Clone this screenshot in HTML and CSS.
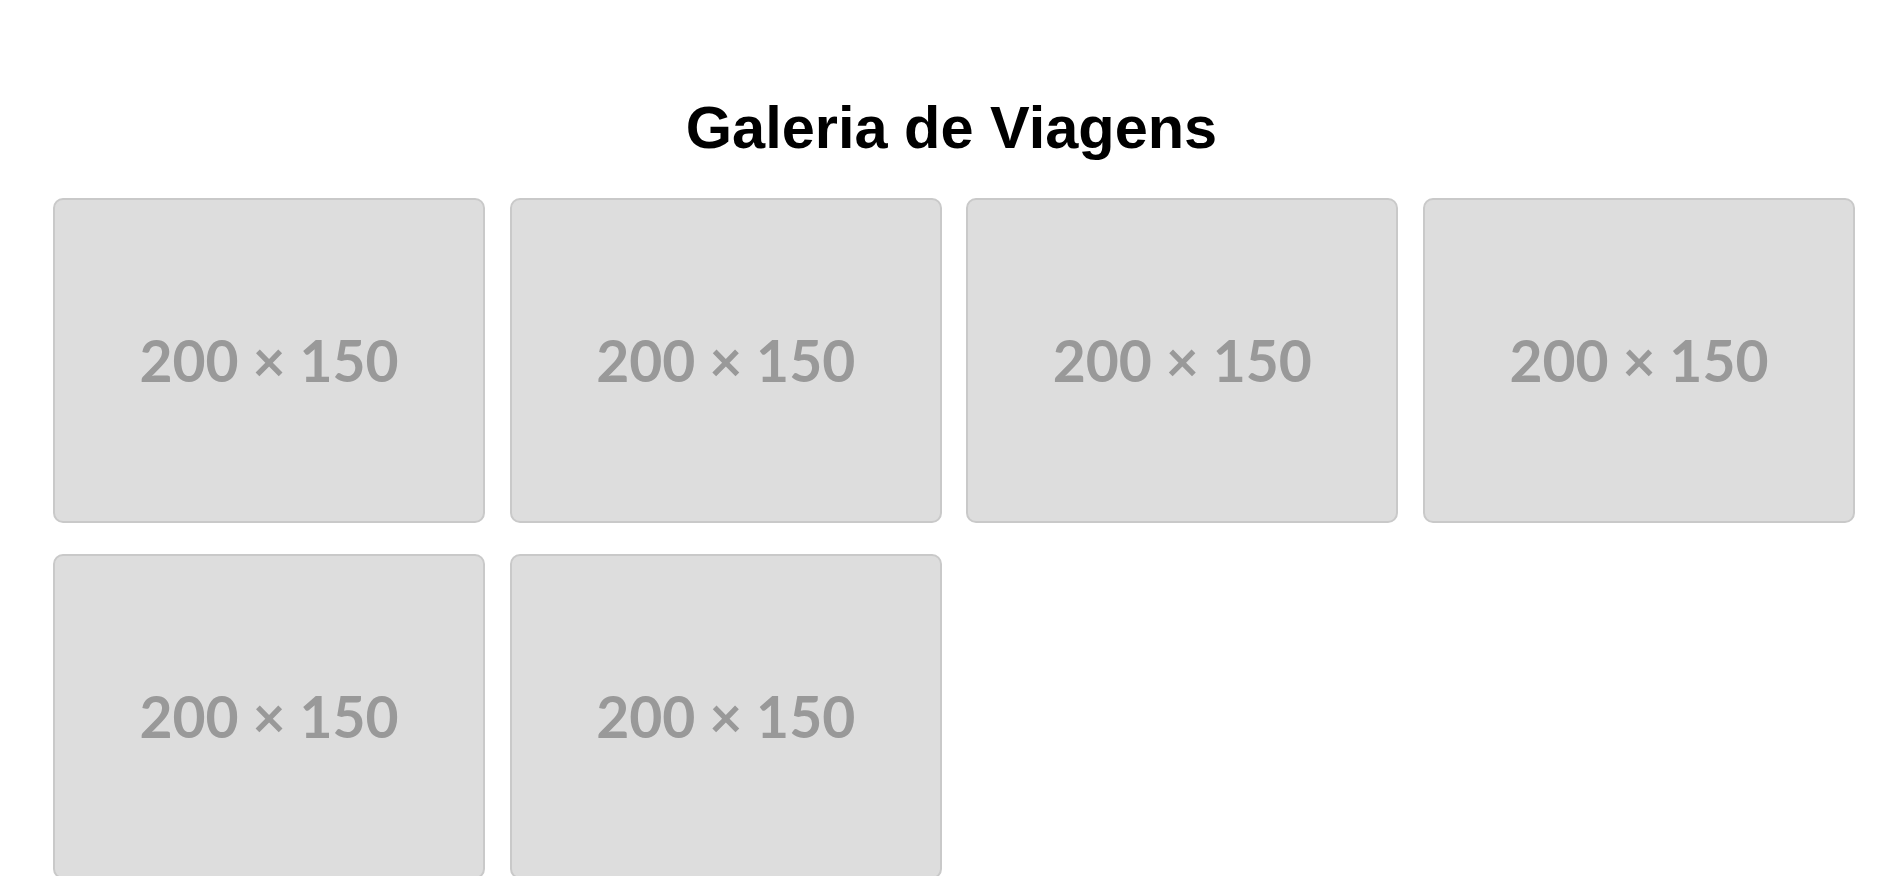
FILE: index.html
```html
<!DOCTYPE html>
<html lang="pt">
<head>
<meta charset="utf-8">
<title>Galeria de Viagens</title>
<link rel="stylesheet" href="styles.css">
</head>
<body>
<h1 class="title">Galeria de Viagens</h1>
<div class="gallery">
  <div class="photo"><span class="ph-text">200 × 150</span></div>
  <div class="photo"><span class="ph-text">200 × 150</span></div>
  <div class="photo"><span class="ph-text">200 × 150</span></div>
  <div class="photo"><span class="ph-text">200 × 150</span></div>
  <div class="photo"><span class="ph-text">200 × 150</span></div>
  <div class="photo"><span class="ph-text">200 × 150</span></div>
</div>
</body>
</html>
```

FILE: styles.css
```css
html, body {
  margin: 0;
  padding: 0;
  background: #ffffff;
}

body {
  font-family: "Liberation Sans", Arial, sans-serif;
  color: #000;
}

.title {
  margin: 93px 0 36px;
  font-size: 59.5px;
  line-height: 69px;
  font-weight: bold;
  text-align: center;
}

.gallery {
  display: grid;
  grid-template-columns: repeat(4, 1fr);
  column-gap: 24.5px;
  row-gap: 31px;
  padding: 0 48px 0 53px;
}

.photo {
  aspect-ratio: 4 / 3;
  background: #dddddd;
  border: 2px solid #c9c9c9;
  border-radius: 10px;
  display: flex;
  align-items: center;
  justify-content: center;
}

.ph-text {
  font-family: Lato, "Noto Sans", sans-serif;
  font-weight: bold;
  font-size: 57px;
  color: #999999;
  line-height: 1;
}
```
